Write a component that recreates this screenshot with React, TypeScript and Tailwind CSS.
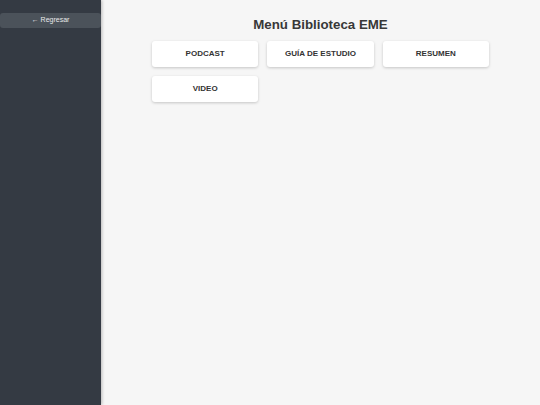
import React from 'react';

const items = ['PODCAST', 'GUÍA DE ESTUDIO', 'RESUMEN', 'VIDEO'];

export default function App() {
  return (
    <div className="flex h-[405px] w-[540px] bg-[#f6f6f6] font-['Liberation_Sans',Arial,sans-serif]">
      {/* Sidebar */}
      <aside className="w-[101px] shrink-0 bg-[#343a43] pt-[13px] shadow-[1px_0_3px_rgba(0,0,0,0.25)]">
        <button className="flex h-[15px] w-full items-center justify-center rounded-[3px] bg-[#4b525a] text-[7px] text-[#e8e9ea]">
          ← Regresar
        </button>
      </aside>

      {/* Main content */}
      <main className="flex flex-1 flex-col items-center pt-[16px]">
        <h1 className="text-[13.3px] font-bold leading-[18px] text-[#383838]">Menú Biblioteca EME</h1>
        <div className="mt-[7px] grid w-[337px] grid-cols-3 gap-x-[9px] gap-y-[9px]">
          {items.map((item) => (
            <button
              key={item}
              className="flex h-[26px] items-center justify-center rounded-[3px] bg-white text-[8px] font-bold text-[#333] shadow-[0_1px_3px_rgba(0,0,0,0.2)]"
            >
              {item}
            </button>
          ))}
        </div>
      </main>
    </div>
  );
}
